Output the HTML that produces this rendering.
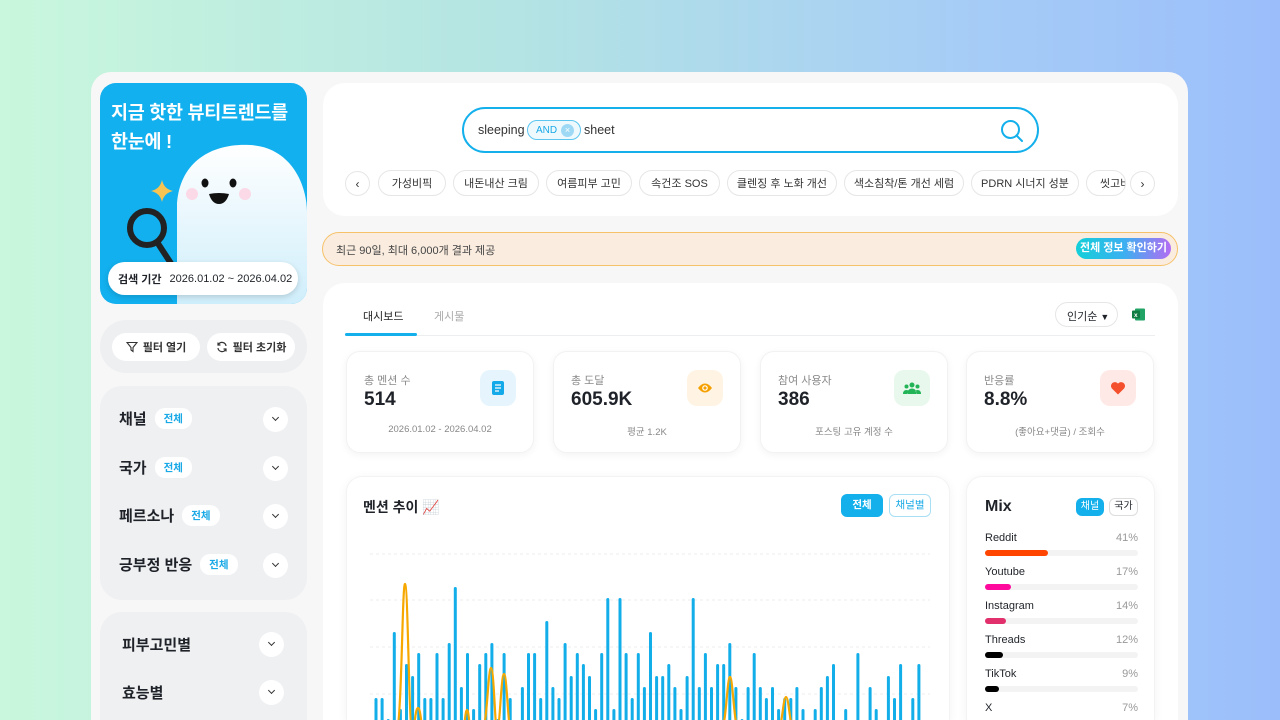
<!DOCTYPE html>
<html><head><meta charset="utf-8">
<style>
*{box-sizing:border-box;margin:0;padding:0}
html{width:1280px;height:720px;overflow:hidden}
body{width:1280px;height:720px;overflow:hidden;background:linear-gradient(90deg,#c9f7dd 0%,#b4e4e3 40%,#a6cdf6 75%,#9bbefb 100%);font-family:"Liberation Sans","Noto Sans CJK KR",sans-serif;color:#1f2329;position:relative}
.abs{position:absolute}
.wrap{left:91px;top:72px;width:1097px;height:648px;background:#f7f7f7;border-radius:20px 20px 0 0}
.hero{left:100px;top:83px;width:207px;height:221px;background:#12b0ee;border-radius:16px;overflow:hidden}
.hero h1{position:absolute;left:11px;top:15px;color:#fff;font-size:18.5px;line-height:29px;font-weight:700;letter-spacing:-0.3px}
.pill{background:#fff;border-radius:17px}
.fbtn{top:333px;height:28px;background:#fff;border-radius:14px;font-size:11px;font-weight:700;display:flex;align-items:center;justify-content:center;gap:5px;color:#333}
.grp{background:#eff0f2;border-radius:22px;left:100px;width:207px}
.row{position:absolute;left:19px;font-size:15px;font-weight:700;display:flex;align-items:center;gap:8px}
.chip{background:#fff;color:#19a9e6;font-size:10.5px;font-weight:700;padding:3px 9px;border-radius:10px}
.chev{position:absolute;width:25px;height:25px;border-radius:50%;background:#fff}
.chev:after{content:"";position:absolute;left:9.5px;top:8px;width:4px;height:4px;border-right:1.5px solid #333;border-bottom:1.5px solid #333;transform:rotate(45deg)}
.card{background:#fff;border-radius:22px}
.tag{top:170px;height:26px;border:1px solid #e6e6e6;border-radius:13px;font-size:11px;color:#333;display:flex;align-items:center;justify-content:center;background:#fff;white-space:nowrap;overflow:hidden}
.arr{width:25px;height:25px;border-radius:50%;border:1px solid #e6e6e6;background:#fff;font-size:12px;display:flex;align-items:center;justify-content:center;color:#333}
.stat{top:351px;width:188px;height:102px;background:#fff;border-radius:14px;box-shadow:0 2px 8px rgba(0,0,0,.05);border:1px solid #f2f2f2}
.stat .l{position:absolute;left:17px;top:20px;font-size:11px;color:#8a8a8a}
.stat .v{position:absolute;left:17px;top:37px;font-size:19px;font-weight:700;color:#1f2329}
.stat .ic{position:absolute;right:17px;top:18px;width:36px;height:36px;border-radius:10px;display:flex;align-items:center;justify-content:center}
.stat .f{position:absolute;left:0;right:0;top:72px;text-align:center;font-size:9.5px;color:#888}
.mixrow{position:absolute;left:18px;width:153px;font-size:11px}
.mixrow .p{position:absolute;right:0;top:0;color:#999}
.mixrow .t{position:absolute;left:0;top:18px;width:153px;height:6px;border-radius:3px;background:#f3f3f3}
.mixrow .b{position:absolute;left:0;top:18px;height:6px;border-radius:3px}
</style></head><body>
<div class="abs wrap"></div>

<div class="abs hero">
<h1>지금 핫한 뷰티트렌드를<br>한눈에 !</h1>
<svg class="abs" style="left:0;top:0" width="207" height="221">
<defs><linearGradient id="gh" x1="0" y1="0" x2="0" y2="1"><stop offset="0" stop-color="#ffffff"/><stop offset="1" stop-color="#cfeefb"/></linearGradient></defs>
<path d="M77 221 L77 120 C80 80 110 60 150 62 C190 64 207 100 207 130 L207 221 Z" fill="url(#gh)"/>
<circle cx="92" cy="111" r="6" fill="#fbd9e6"/><circle cx="145" cy="111" r="6" fill="#fbd9e6"/>
<ellipse cx="105" cy="100" rx="3.5" ry="4.5" fill="#111"/><ellipse cx="133" cy="100" rx="3.5" ry="4.5" fill="#111"/>
<path d="M109 111 Q119 109 129 111 Q126 121 119 121 Q112 121 109 111Z" fill="#111"/>
<path d="M62 97 Q64 106 73 108 Q64 110 62 119 Q60 110 51 108 Q60 106 62 97Z" fill="#f6c453"/>
<circle cx="47" cy="145" r="17" fill="none" stroke="#222" stroke-width="6"/>
<path d="M57 159 L74 185" stroke="#222" stroke-width="6" stroke-linecap="round"/>
</svg>
<div class="abs pill" style="left:8px;top:179px;width:190px;height:33px;box-shadow:0 2px 6px rgba(0,0,0,.15);font-size:11px;display:flex;align-items:center;padding-left:10px;gap:8px"><b>검색 기간</b><span>2026.01.02 ~ 2026.04.02</span></div>
</div>

<div class="abs" style="left:100px;top:320px;width:207px;height:53px;background:#eeeff1;border-radius:26px"></div>
<div class="abs fbtn" style="left:112px;width:88px"><svg width="12" height="12" viewBox="0 0 12 12"><path d="M1 1.5h10L7 6.5v4L5 9V6.5Z" fill="none" stroke="#333" stroke-width="1.1"/></svg>필터 열기</div>
<div class="abs fbtn" style="left:207px;width:88px"><svg width="12" height="12" viewBox="0 0 12 12"><path d="M10 5A4 4 0 0 0 2.5 3.5M2 7A4 4 0 0 0 9.5 8.5" fill="none" stroke="#333" stroke-width="1.2"/><path d="M2 1.5v2.5h2.5M10 10.5V8H7.5" fill="none" stroke="#333" stroke-width="1.2"/></svg>필터 초기화</div>

<div class="abs grp" style="top:386px;height:214px">
<div class="row" style="top:22px">채널 <span class="chip">전체</span></div>
<div class="row" style="top:71px">국가 <span class="chip">전체</span></div>
<div class="row" style="top:119px">페르소나 <span class="chip">전체</span></div>
<div class="row" style="top:168px">긍부정 반응 <span class="chip">전체</span></div>
<div class="chev" style="left:163px;top:21px"></div>
<div class="chev" style="left:163px;top:70px"></div>
<div class="chev" style="left:163px;top:118px"></div>
<div class="chev" style="left:163px;top:167px"></div>
</div>
<div class="abs grp" style="top:612px;height:108px;border-radius:22px 22px 0 0">
<div class="row" style="top:22px;left:22px">피부고민별</div>
<div class="row" style="top:70px;left:22px">효능별</div>
<div class="chev" style="left:159px;top:20px"></div>
<div class="chev" style="left:159px;top:68px"></div>
</div>

<div class="abs card" style="left:323px;top:83px;width:855px;height:133px"></div>
<div class="abs" style="left:462px;top:107px;width:577px;height:46px;border:2.5px solid #14b0ec;border-radius:23px;background:#fff"></div>
<div class="abs" style="left:478px;top:123px;font-size:12.5px;color:#333">sleeping</div>
<div class="abs" style="left:527px;top:120px;width:54px;height:20px;border:1.5px solid #5cc6f0;border-radius:10px;background:#eef9fe;font-size:10px;color:#19a9e6;padding:4px 0 0 8px">AND<span class="abs" style="left:33px;top:2.5px;width:13px;height:13px;border-radius:50%;background:#9dd9f4;color:#fff;font-size:9px;line-height:13px;text-align:center">×</span></div>
<div class="abs" style="left:584px;top:123px;font-size:12.5px;color:#333">sheet</div>
<svg class="abs" style="left:1000px;top:119px" width="24" height="24" viewBox="0 0 24 24"><circle cx="10.5" cy="10.5" r="8.5" fill="none" stroke="#14b0ec" stroke-width="2"/><path d="M16.5 16.5L22 22" stroke="#14b0ec" stroke-width="2" stroke-linecap="round"/></svg>

<div class="abs arr" style="left:345px;top:171px">‹</div>
<div class="abs tag" style="left:378px;width:68px">가성비픽</div>
<div class="abs tag" style="left:453px;width:86px">내돈내산 크림</div>
<div class="abs tag" style="left:546px;width:86px">여름피부 고민</div>
<div class="abs tag" style="left:639px;width:81px">속건조 SOS</div>
<div class="abs tag" style="left:727px;width:110px">클렌징 후 노화 개선</div>
<div class="abs tag" style="left:844px;width:120px">색소침착/톤 개선 세럼</div>
<div class="abs tag" style="left:971px;width:108px">PDRN 시너지 성분</div>
<div class="abs tag" style="left:1086px;width:40px;justify-content:flex-start;padding-left:13px">씻고바</div>
<div class="abs arr" style="left:1130px;top:171px">›</div>

<div class="abs" style="left:322px;top:232px;width:856px;height:34px;background:#faede0;border:1px solid #f6c168;border-radius:17px;font-size:11px;color:#444;padding:9px 0 0 13px">최근 90일, 최대 6,000개 결과 제공</div>
<div class="abs" style="left:1076px;top:238px;width:95px;height:21px;border-radius:11px;background:linear-gradient(90deg,#13cfd9,#3bb0f0 50%,#b36cf3);color:#fff;font-size:11px;font-weight:700;text-align:center;line-height:21px">전체 정보 확인하기</div>

<div class="abs card" style="left:323px;top:283px;width:855px;height:437px;border-radius:22px 22px 0 0"></div>
<div class="abs" style="left:363px;top:308px;font-size:11px;color:#222">대시보드</div>
<div class="abs" style="left:434px;top:308px;font-size:11px;color:#aaa">게시물</div>
<div class="abs" style="left:345px;top:335px;width:810px;height:1px;background:#eceeef"></div>
<div class="abs" style="left:345px;top:333px;width:72px;height:3px;background:#14b0ec;border-radius:2px"></div>
<div class="abs" style="left:1055px;top:302px;width:63px;height:25px;border:1px solid #e6e6e6;border-radius:13px;font-size:11px;padding:5px 0 0 11px">인기순 <span style="font-size:9px">▼</span></div>
<svg class="abs" style="left:1132px;top:308px" width="13" height="13" viewBox="0 0 13 13"><rect x="3" y="0.5" width="10" height="12" rx="1" fill="#21a366"/><rect x="0" y="2.5" width="8" height="8" rx="1" fill="#107c41"/><text x="2" y="9" font-size="6.5" fill="#fff" font-family="Liberation Sans" font-weight="bold">x</text></svg>

<div class="abs stat" style="left:346px"><div class="l">총 멘션 수</div><div class="v">514</div><div class="ic" style="background:#e6f5fd"><svg width="14" height="16" viewBox="0 0 14 16"><rect x="1" y="1" width="12" height="14" rx="2" fill="#14a9e8"/><path d="M4 5h6M4 8h6M4 11h4" stroke="#fff" stroke-width="1.3"/></svg></div><div class="f">2026.01.02 - 2026.04.02</div></div>
<div class="abs stat" style="left:553px"><div class="l">총 도달</div><div class="v">605.9K</div><div class="ic" style="background:#fff4e3"><svg width="16" height="12" viewBox="0 0 16 12"><path d="M1 6Q8 -3 15 6Q8 15 1 6Z" fill="#f5a000"/><circle cx="8" cy="6" r="2.8" fill="#fff"/><circle cx="8" cy="6" r="1.6" fill="#f5a000"/></svg></div><div class="f">평균 1.2K</div></div>
<div class="abs stat" style="left:760px"><div class="l">참여 사용자</div><div class="v">386</div><div class="ic" style="background:#e8f8ec"><svg width="18" height="12" viewBox="0 0 18 12"><circle cx="9" cy="3" r="2.5" fill="#22b457"/><circle cx="3.5" cy="4.5" r="2" fill="#22b457"/><circle cx="14.5" cy="4.5" r="2" fill="#22b457"/><path d="M4.5 12Q4.5 6.5 9 6.5Q13.5 6.5 13.5 12Z M0 12Q0 8 3.5 8Q5 8 5.5 9L4 12Z M18 12Q18 8 14.5 8Q13 8 12.5 9L14 12Z" fill="#22b457"/></svg></div><div class="f">포스팅 고유 계정 수</div></div>
<div class="abs stat" style="left:966px"><div class="l">반응률</div><div class="v">8.8%</div><div class="ic" style="background:#ffe9e6"><svg width="16" height="14" viewBox="0 0 16 14"><path d="M8 13.5L1.8 7.4A3.9 3.9 0 0 1 8 2.6A3.9 3.9 0 0 1 14.2 7.4Z" fill="#f4502d"/></svg></div><div class="f">(좋아요+댓글) / 조회수</div></div>

<div class="abs" style="left:346px;top:476px;width:604px;height:244px;background:#fff;border-radius:16px 16px 0 0;box-shadow:0 2px 10px rgba(0,0,0,.05);border:1px solid #f3f3f3;border-bottom:none"></div>
<div class="abs" style="left:363px;top:497px;font-size:14px;font-weight:700">멘션 추이 📈</div>
<div class="abs" style="left:841px;top:494px;width:42px;height:23px;border-radius:6px;background:#14b0ec;color:#fff;font-size:10.5px;font-weight:700;text-align:center;line-height:23px">전체</div>
<div class="abs" style="left:889px;top:494px;width:42px;height:23px;border-radius:6px;border:1px solid #a9dff5;color:#19a9e6;font-size:10.5px;text-align:center;line-height:21px">채널별</div>

<svg class="abs" style="left:0;top:0" width="1280" height="720">
<g stroke="#eeeeee" stroke-dasharray="3 3"><line x1="370" y1="554" x2="930" y2="554"/><line x1="370" y1="600" x2="930" y2="600"/><line x1="370" y1="647" x2="930" y2="647"/><line x1="370" y1="694" x2="930" y2="694"/></g>
<g fill="#12aeea">
<rect x="374.5" y="698" width="3" height="30" rx="1.5"/><rect x="380.6" y="698" width="3" height="30" rx="1.5"/><rect x="386.7" y="719" width="3" height="30" rx="1.5"/><rect x="392.8" y="632" width="3" height="90" rx="1.5"/><rect x="398.9" y="709" width="3" height="30" rx="1.5"/><rect x="405" y="664" width="3" height="60" rx="1.5"/><rect x="411.1" y="676" width="3" height="50" rx="1.5"/><rect x="417.2" y="653" width="3" height="70" rx="1.5"/><rect x="423.3" y="698" width="3" height="30" rx="1.5"/><rect x="429.4" y="698" width="3" height="30" rx="1.5"/><rect x="435.5" y="653" width="3" height="70" rx="1.5"/><rect x="441.6" y="698" width="3" height="30" rx="1.5"/><rect x="447.7" y="643" width="3" height="80" rx="1.5"/><rect x="453.8" y="587" width="3" height="140" rx="1.5"/><rect x="459.9" y="687" width="3" height="40" rx="1.5"/><rect x="466" y="653" width="3" height="70" rx="1.5"/><rect x="472.1" y="709" width="3" height="30" rx="1.5"/><rect x="478.2" y="664" width="3" height="60" rx="1.5"/><rect x="484.3" y="653" width="3" height="70" rx="1.5"/><rect x="490.4" y="643" width="3" height="80" rx="1.5"/><rect x="496.5" y="719" width="3" height="30" rx="1.5"/><rect x="502.6" y="653" width="3" height="70" rx="1.5"/><rect x="508.7" y="698" width="3" height="30" rx="1.5"/><rect x="520.9" y="687" width="3" height="40" rx="1.5"/><rect x="527" y="653" width="3" height="70" rx="1.5"/><rect x="533.1" y="653" width="3" height="70" rx="1.5"/><rect x="539.2" y="698" width="3" height="30" rx="1.5"/><rect x="545.3" y="621" width="3" height="100" rx="1.5"/><rect x="551.4" y="687" width="3" height="40" rx="1.5"/><rect x="557.5" y="698" width="3" height="30" rx="1.5"/><rect x="563.6" y="643" width="3" height="80" rx="1.5"/><rect x="569.7" y="676" width="3" height="50" rx="1.5"/><rect x="575.8" y="653" width="3" height="70" rx="1.5"/><rect x="581.9" y="664" width="3" height="60" rx="1.5"/><rect x="588" y="676" width="3" height="50" rx="1.5"/><rect x="594.1" y="709" width="3" height="30" rx="1.5"/><rect x="600.2" y="653" width="3" height="70" rx="1.5"/><rect x="606.3" y="598" width="3" height="130" rx="1.5"/><rect x="612.4" y="709" width="3" height="30" rx="1.5"/><rect x="618.5" y="598" width="3" height="130" rx="1.5"/><rect x="624.6" y="653" width="3" height="70" rx="1.5"/><rect x="630.7" y="698" width="3" height="30" rx="1.5"/><rect x="636.8" y="653" width="3" height="70" rx="1.5"/><rect x="642.9" y="687" width="3" height="40" rx="1.5"/><rect x="649" y="632" width="3" height="90" rx="1.5"/><rect x="655.1" y="676" width="3" height="50" rx="1.5"/><rect x="661.2" y="676" width="3" height="50" rx="1.5"/><rect x="667.3" y="664" width="3" height="60" rx="1.5"/><rect x="673.4" y="687" width="3" height="40" rx="1.5"/><rect x="679.5" y="709" width="3" height="30" rx="1.5"/><rect x="685.6" y="676" width="3" height="50" rx="1.5"/><rect x="691.7" y="598" width="3" height="130" rx="1.5"/><rect x="697.8" y="687" width="3" height="40" rx="1.5"/><rect x="703.9" y="653" width="3" height="70" rx="1.5"/><rect x="710" y="687" width="3" height="40" rx="1.5"/><rect x="716.1" y="664" width="3" height="60" rx="1.5"/><rect x="722.2" y="664" width="3" height="60" rx="1.5"/><rect x="728.3" y="643" width="3" height="80" rx="1.5"/><rect x="734.4" y="687" width="3" height="40" rx="1.5"/><rect x="740.5" y="719" width="3" height="30" rx="1.5"/><rect x="746.6" y="687" width="3" height="40" rx="1.5"/><rect x="752.7" y="653" width="3" height="70" rx="1.5"/><rect x="758.8" y="687" width="3" height="40" rx="1.5"/><rect x="764.9" y="698" width="3" height="30" rx="1.5"/><rect x="771" y="687" width="3" height="40" rx="1.5"/><rect x="777.1" y="709" width="3" height="30" rx="1.5"/><rect x="783.2" y="698" width="3" height="30" rx="1.5"/><rect x="789.3" y="698" width="3" height="30" rx="1.5"/><rect x="795.4" y="687" width="3" height="40" rx="1.5"/><rect x="801.5" y="709" width="3" height="30" rx="1.5"/><rect x="813.7" y="709" width="3" height="30" rx="1.5"/><rect x="819.8" y="687" width="3" height="40" rx="1.5"/><rect x="825.9" y="676" width="3" height="50" rx="1.5"/><rect x="832" y="664" width="3" height="60" rx="1.5"/><rect x="844.2" y="709" width="3" height="30" rx="1.5"/><rect x="856.4" y="653" width="3" height="70" rx="1.5"/><rect x="868.6" y="687" width="3" height="40" rx="1.5"/><rect x="874.7" y="709" width="3" height="30" rx="1.5"/><rect x="886.9" y="676" width="3" height="50" rx="1.5"/><rect x="893" y="698" width="3" height="30" rx="1.5"/><rect x="899.1" y="664" width="3" height="60" rx="1.5"/><rect x="911.3" y="698" width="3" height="30" rx="1.5"/><rect x="917.4" y="664" width="3" height="60" rx="1.5"/>
</g>
<path fill="none" stroke="#f7a800" stroke-width="2.2" d="M396 730 C402 730 402 584 405 584 C408 584 409 730 412 730 C415 730 415 708 418 708 C421 708 421 730 424 730 M462 730 C465 730 465 710 467 710 C469 710 469 730 472 730 M482 730 C487 730 488 668 491 668 C494 668 495 730 497 730 C500 730 501 674 504 674 C507 674 508 730 511 730 M721 730 C726 730 727 677 730 677 C733 677 734 730 739 730 M778 730 C782 730 783 697 786 697 C789 697 790 730 794 730"/>
</svg>

<div class="abs" style="left:966px;top:476px;width:189px;height:244px;background:#fff;border-radius:16px 16px 0 0;box-shadow:0 2px 10px rgba(0,0,0,.05);border:1px solid #f3f3f3;border-bottom:none">
<div class="abs" style="left:18px;top:21px;font-size:16px;font-weight:700">Mix</div>
<div class="abs" style="left:109px;top:21px;width:28px;height:18px;border-radius:6px;background:#14b0ec;color:#fff;font-size:10px;text-align:center;line-height:18px">채널</div>
<div class="abs" style="left:142px;top:21px;width:29px;height:18px;border-radius:6px;border:1px solid #ddd;font-size:10px;text-align:center;line-height:16px">국가</div>
<div class="mixrow" style="top:55px">Reddit<span class="p">41%</span><div class="t"></div><div class="b" style="width:63px;background:#ff4500"></div></div>
<div class="mixrow" style="top:89px">Youtube<span class="p">17%</span><div class="t"></div><div class="b" style="width:26px;background:#ff0a9c"></div></div>
<div class="mixrow" style="top:123px">Instagram<span class="p">14%</span><div class="t"></div><div class="b" style="width:21px;background:#e1306c"></div></div>
<div class="mixrow" style="top:157px">Threads<span class="p">12%</span><div class="t"></div><div class="b" style="width:18px;background:#000"></div></div>
<div class="mixrow" style="top:191px">TikTok<span class="p">9%</span><div class="t"></div><div class="b" style="width:14px;background:#000"></div></div>
<div class="mixrow" style="top:225px">X<span class="p">7%</span><div class="t"></div><div class="b" style="width:11px;background:#000"></div></div>
</div>
</body></html>
